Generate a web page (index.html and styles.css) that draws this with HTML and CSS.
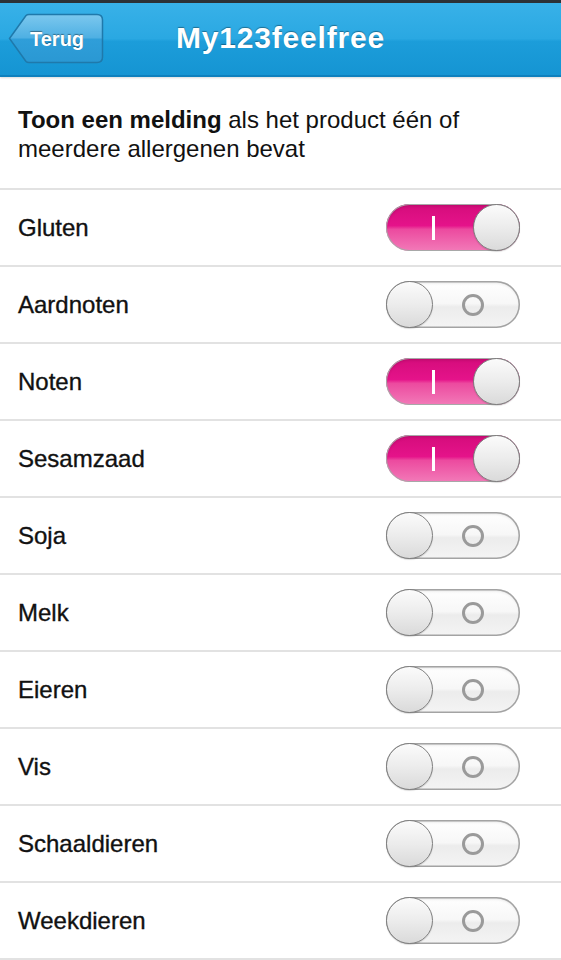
FILE: index.html
```html
<!DOCTYPE html>
<html lang="nl">
<head>
  <meta charset="UTF-8" />
  <meta name="viewport" content="width=device-width, initial-scale=1.0" />
  <title>My123feelfree</title>
  <link rel="stylesheet" href="styles.css">
</head>
<body>
  <header class="topbar">
    <a class="back" href="#">
      <svg class="back-shape" width="96" height="52" viewBox="0 0 96 52">
        <defs>
          <linearGradient id="backFill" x1="0" y1="0" x2="0" y2="1">
            <stop offset="0" stop-color="#7cc8ee" />
            <stop offset="0.48" stop-color="#4fb0e3" />
            <stop offset="0.52" stop-color="#2f9ed9" />
            <stop offset="1" stop-color="#2a98d3" />
          </linearGradient>
        </defs>
        <path d="M1.5 25.5 L18 2.5 Q19 1.5 21 1.5 L89 1.5 Q94.5 1.5 94.5 7 L94.5 44 Q94.5 49.5 89 49.5 L21 49.5 Q19 49.5 18 48.5 Z"
              fill="url(#backFill)" stroke="#1f79ab" stroke-width="1.5" />
      </svg>
      <span class="back-label">Terug</span>
    </a>
    <h1>My123feelfree</h1>
    <span></span>
  </header>

  <div class="intro">
    <p><strong>Toon een melding</strong> als het product één of meerdere allergenen bevat</p>
  </div>

  <ul class="list">
    <li class="row"><span class="label">Gluten</span><span class="switch on"><span class="mark"></span><span class="knob"></span></span></li>
    <li class="row"><span class="label">Aardnoten</span><span class="switch"><span class="knob"></span><span class="ring"></span></span></li>
    <li class="row"><span class="label">Noten</span><span class="switch on"><span class="mark"></span><span class="knob"></span></span></li>
    <li class="row"><span class="label">Sesamzaad</span><span class="switch on"><span class="mark"></span><span class="knob"></span></span></li>
    <li class="row"><span class="label">Soja</span><span class="switch"><span class="knob"></span><span class="ring"></span></span></li>
    <li class="row"><span class="label">Melk</span><span class="switch"><span class="knob"></span><span class="ring"></span></span></li>
    <li class="row"><span class="label">Eieren</span><span class="switch"><span class="knob"></span><span class="ring"></span></span></li>
    <li class="row"><span class="label">Vis</span><span class="switch"><span class="knob"></span><span class="ring"></span></span></li>
    <li class="row"><span class="label">Schaaldieren</span><span class="switch"><span class="knob"></span><span class="ring"></span></span></li>
    <li class="row"><span class="label">Weekdieren</span><span class="switch"><span class="knob"></span><span class="ring"></span></span></li>
  </ul>
</body>
</html>
```

FILE: styles.css
```css
body {
  font-family: 'Liberation Sans', Arial, sans-serif;
  background: #fff;
  color: #111;
  margin: 0;
  overflow: hidden;
}

.topbar {
  height: 74px;
  border-top: 3px solid #2c3136;
  background: linear-gradient(to bottom, #38b1e8 0%, #2aa8e2 48%, #1c9dda 52%, #1594d2 100%);
  box-shadow: inset 0 -2px 0 #0e80bd, 0 1px 2px rgba(0, 0, 0, 0.15);
  display: grid;
  grid-template-columns: 1fr auto 1fr;
  align-items: center;
  padding-bottom: 4px;
  box-sizing: border-box;
  height: 77px;
  position: relative;
  z-index: 1;
}

.topbar h1 {
  margin: 0;
  font-size: 30px;
  letter-spacing: 0.8px;
  color: #fff;
  text-shadow: 0 -1px 1px rgba(0, 0, 0, 0.35);
}

.back {
  position: relative;
  width: 96px;
  height: 52px;
  margin-left: 8px;
  margin-top: 2px;
  display: flex;
  align-items: center;
  text-decoration: none;
}

.back-shape {
  position: absolute;
  left: 0;
  top: 0;
}

.back-label {
  position: relative;
  margin-left: 22px;
  font-size: 20px;
  font-weight: bold;
  color: #fff;
  text-shadow: 0 -1px 1px rgba(0, 0, 0, 0.4);
}

.intro {
  padding: 28px 18px 25px;
  border-bottom: 2px solid #e2e2e2;
}

.intro p {
  margin: 0;
  font-size: 24px;
  line-height: 29px;
}

.list {
  list-style: none;
  margin: 0;
  padding: 0;
}

.row {
  height: 75px;
  border-bottom: 2px solid #e2e2e2;
  display: flex;
  align-items: center;
  justify-content: space-between;
  padding: 0 41px 0 18px;
  font-size: 24px;
}

.label {
  -webkit-text-stroke: 0.35px #111;
}

.switch {
  width: 134px;
  height: 47px;
  border-radius: 24px;
  box-sizing: border-box;
  display: flex;
  align-items: center;
  background: linear-gradient(to bottom, #ffffff 0%, #f7f7f7 48%, #ececec 55%, #f4f4f4 100%);
  box-shadow: inset 0 0 0 1.5px #a3a3a3, inset 0 2px 3px rgba(0, 0, 0, 0.12);
}

.switch.on {
  background: linear-gradient(to bottom, #d40c7b 0%, #e5138a 46%, #ec4a9f 54%, #f27ab8 100%);
  box-shadow: inset 0 0 0 1px #a8a8a8, inset 0 2px 3px rgba(0, 0, 0, 0.15);
  padding-left: 46px;
}

.knob {
  width: 47px;
  height: 47px;
  box-sizing: border-box;
  border-radius: 50%;
  border: 1.5px solid #7e7e7e;
  background: linear-gradient(to bottom, #fbfbfb 0%, #ececec 50%, #dadada 100%);
  box-shadow: 0 1px 1px rgba(0, 0, 0, 0.15);
}

.switch.on .knob {
  margin-left: auto;
}

.mark {
  width: 3px;
  height: 24px;
  background: #fff;
}

.ring {
  width: 22px;
  height: 22px;
  box-sizing: border-box;
  border-radius: 50%;
  border: 3px solid #9a9a9a;
  margin-left: 29px;
}
```
